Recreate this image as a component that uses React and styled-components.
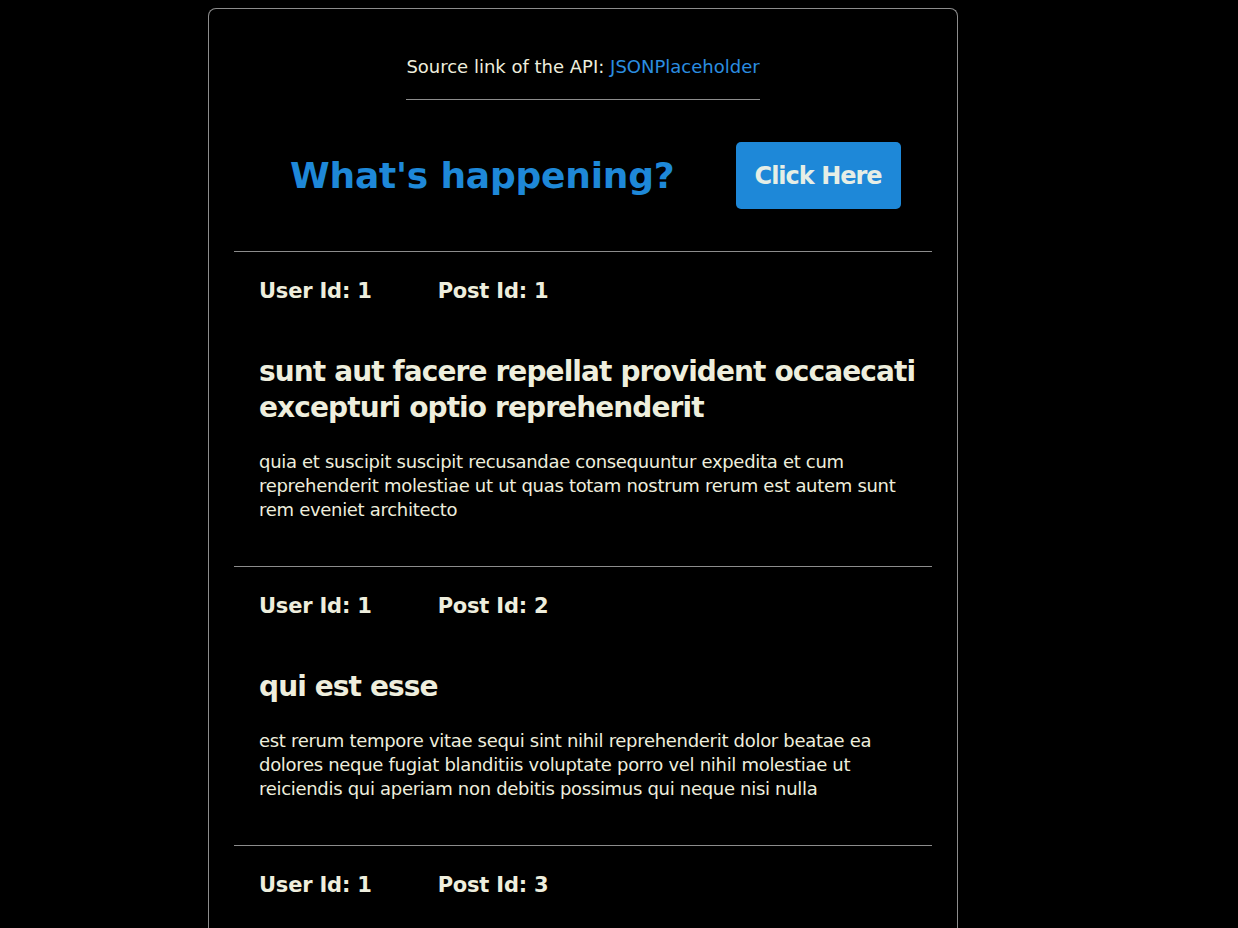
import React from "react";
import styled, { createGlobalStyle } from "styled-components";

const GlobalStyle = createGlobalStyle`
  html, body {
    margin: 0;
    background: #000;
  }
  body {
    padding: 8px 0 0 208px;
    font-family: "DejaVu Sans", "Noto Sans", sans-serif;
    color: #eeeedd;
  }
`;

const Card = styled.div`
  width: 750px;
  box-sizing: border-box;
  border: 1px solid #8c8c8c;
  border-bottom: none;
  border-radius: 8px 8px 0 0;
  padding: 0 25px;
  min-height: 920px;
`;

const SourceRow = styled.div`
  display: flex;
  justify-content: center;
  padding-top: 47px;
`;

const Source = styled.p`
  margin: 0;
  font-size: 18px;
  line-height: 22px;
  padding-bottom: 21px;
  border-bottom: 1px solid #8c8c8c;
  color: #eeeedd;
`;

const ApiLink = styled.a`
  color: #2b8ee0;
  text-decoration: none;
`;

const HeaderRow = styled.div`
  display: flex;
  align-items: center;
  gap: 61px;
  padding: 42px 0 42px 56px;
`;

const Heading = styled.h1`
  margin: 0;
  font-size: 36px;
  font-weight: bold;
  letter-spacing: -0.2px;
  color: #1e88d8;
`;

const Button = styled.button`
  height: 67px;
  width: 165px;
  border: none;
  border-radius: 5px;
  background: #1e88d8;
  color: #e6eee6;
  font-family: inherit;
  font-size: 24px;
  font-weight: bold;
  letter-spacing: -1px;
  cursor: pointer;
`;

const Post = styled.article`
  border-top: 1px solid #8c8c8c;
  padding: 27px 10px 44px 25px;
`;

const Ids = styled.div`
  display: flex;
  gap: 66px;
  font-size: 21px;
  line-height: 24px;
  font-weight: bold;
  letter-spacing: -0.2px;
`;

const Title = styled.h2`
  margin: 51px 0 24px;
  font-size: 28px;
  line-height: 36px;
  font-weight: bold;
  letter-spacing: -0.9px;
`;

const Body = styled.p`
  margin: 0;
  font-size: 18px;
  line-height: 24px;
  letter-spacing: -0.3px;
`;

const posts = [
  {
    userId: 1,
    id: 1,
    title: "sunt aut facere repellat provident occaecati excepturi optio reprehenderit",
    body: "quia et suscipit suscipit recusandae consequuntur expedita et cum reprehenderit molestiae ut ut quas totam nostrum rerum est autem sunt rem eveniet architecto",
  },
  {
    userId: 1,
    id: 2,
    title: "qui est esse",
    body: "est rerum tempore vitae sequi sint nihil reprehenderit dolor beatae ea dolores neque fugiat blanditiis voluptate porro vel nihil molestiae ut reiciendis qui aperiam non debitis possimus qui neque nisi nulla",
  },
  {
    userId: 1,
    id: 3,
    title: "ea molestias quasi exercitationem repellat qui ipsa sit aut",
    body: "et iusto sed quo iure voluptatem occaecati omnis eligendi aut ad voluptatem doloribus vel accusantium quis pariatur molestiae porro eius odio et labore et velit aut",
  },
];

const App = () => {
  return (
    <>
      <GlobalStyle />
      <Card>
        <SourceRow>
          <Source>
            Source link of the API: <ApiLink href="#">JSONPlaceholder</ApiLink>
          </Source>
        </SourceRow>
        <HeaderRow>
          <Heading>What's happening?</Heading>
          <Button>Click Here</Button>
        </HeaderRow>
        {posts.map((post) => (
          <Post key={post.id}>
            <Ids>
              <span>User Id: {post.userId}</span>
              <span>Post Id: {post.id}</span>
            </Ids>
            <Title>{post.title}</Title>
            <Body>{post.body}</Body>
          </Post>
        ))}
      </Card>
    </>
  );
};

export default App;
